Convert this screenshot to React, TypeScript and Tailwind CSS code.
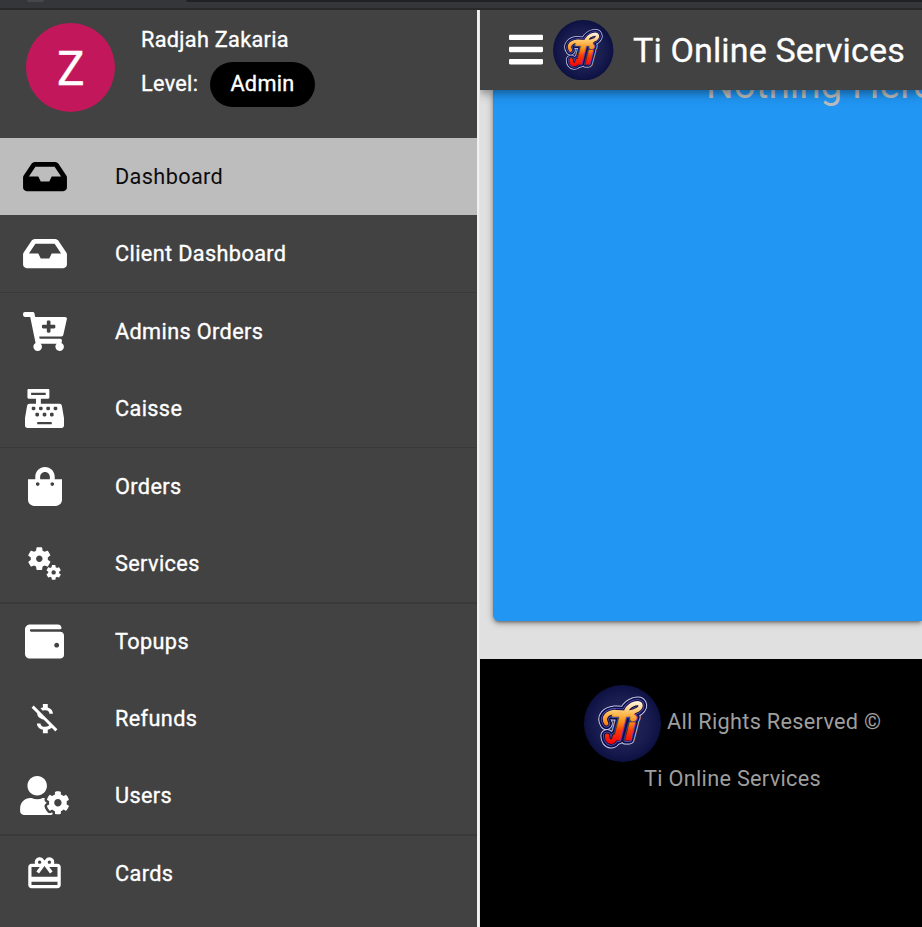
import { useId, type ReactNode } from "react";
import {
  FaInbox,
  FaCartPlus,
  FaCashRegister,
  FaShoppingBag,
  FaWallet,
  FaUserCog,
  FaBars,
} from "react-icons/fa";
import { MdMiscellaneousServices, MdMoneyOff, MdCardGiftcard } from "react-icons/md";

function Logo({ className }: { className: string }) {
  const id = useId();
  const layers = [
    { color: "#c9c9e6", width: 11.5 },
    { color: "#0a0d4c", width: 9 },
    { color: "#5957b4", width: 4.5 },
    { color: "#120b3a", width: 2.5 },
  ];
  const lettering = (
    <g transform="translate(48 72) skewX(-8)">
      <text x="-18" y="0" fontSize="51">T</text>
      <text x="5" y="0" fontSize="43">i</text>
    </g>
  );
  const flourish = "M29 50C24 42 30 36 40 35C53 36 62 37 70 32C76 27 74 22 66 24C60 26 57 29 55 33";
  const hook = "M40 67C40 76 30 76 30 66";
  return (
    <svg viewBox="0 0 100 100" className={className}>
      <defs>
        <radialGradient id={id + "b"}>
          <stop offset="0" stopColor="#242759" />
          <stop offset="0.65" stopColor="#1a1d50" />
          <stop offset="1" stopColor="#0d1142" />
        </radialGradient>
        <linearGradient id={id + "f"} gradientUnits="userSpaceOnUse" x1="0" y1="22" x2="0" y2="75">
          <stop offset="0" stopColor="#fff4e0" />
          <stop offset="0.28" stopColor="#ffbd55" />
          <stop offset="0.52" stopColor="#f98712" />
          <stop offset="0.7" stopColor="#fb3a08" />
          <stop offset="1" stopColor="#f50808" />
        </linearGradient>
        <linearGradient id={id + "t"} gradientUnits="userSpaceOnUse" x1="0" y1="-50" x2="0" y2="3">
          <stop offset="0" stopColor="#fff4e0" />
          <stop offset="0.28" stopColor="#ffbd55" />
          <stop offset="0.52" stopColor="#f98712" />
          <stop offset="0.7" stopColor="#fb3a08" />
          <stop offset="1" stopColor="#f50808" />
        </linearGradient>
      </defs>
      <circle cx="50" cy="50" r="50" fill={`url(#${id}b)`} />
      <g
        fontFamily="Lato, sans-serif"
        fontWeight="900"
        fontStyle="italic"
        strokeLinejoin="round"
        strokeLinecap="round"
      >
        {layers.map((l) => (
          <g key={l.color} stroke={l.color} strokeWidth={l.width} fill={l.color}>
            {lettering}
            <path d={flourish} fill="none" strokeWidth={l.width + 5.5} />
            <path d={hook} fill="none" strokeWidth={l.width + 6} />
          </g>
        ))}
        <g fill={`url(#${id}t)`} stroke={`url(#${id}t)`} strokeWidth="1.6">
          {lettering}
        </g>
        <g stroke={`url(#${id}f)`} fill="none">
          <path d={flourish} strokeWidth="5.5" />
          <path d={hook} strokeWidth="6" />
        </g>
      </g>
    </svg>
  );
}

interface Item {
  label: string;
  icon: ReactNode;
  active?: boolean;
}

const md = "size-[39px]";

const groups: Item[][] = [
  [
    { label: "Dashboard", icon: <FaInbox className="-mt-px h-[39px] w-[44px] text-black" />, active: true },
    { label: "Client Dashboard", icon: <FaInbox className="-mt-px h-[39px] w-[44px]" /> },
  ],
  [
    { label: "Admins Orders", icon: <FaCartPlus className="h-[39px] w-[44px]" /> },
    { label: "Caisse", icon: <FaCashRegister className="-mt-px size-[39px]" /> },
  ],
  [
    { label: "Orders", icon: <FaShoppingBag className="h-[39px] w-[34px]" /> },
    { label: "Services", icon: <MdMiscellaneousServices className={md} /> },
  ],
  [
    { label: "Topups", icon: <FaWallet className={md} /> },
    { label: "Refunds", icon: <MdMoneyOff className={md} /> },
    { label: "Users", icon: <FaUserCog className="h-[39px] w-[49px]" /> },
  ],
  [{ label: "Cards", icon: <MdCardGiftcard className={md} /> }],
];

const dividers = ["", "h-px", "h-px", "h-[2px] -mb-px", "h-[2px] -mb-px"];

function NavRow({ item }: { item: Item }) {
  return (
    <a
      className={
        "flex h-[77px] items-center pl-[14px] text-[21.7px] tracking-[0.37px] " +
        (item.active ? "bg-[#bdbdbd] text-[#0c0c0c]" : "text-white [-webkit-text-stroke:0.35px_white]")
      }
    >
      <span className="flex w-[61px] shrink-0 justify-center">{item.icon}</span>
      <span className="ml-10 pt-[2px]">{item.label}</span>
    </a>
  );
}

function Sidebar() {
  return (
    <aside className="w-[477px] shrink-0 overflow-hidden bg-[#424242] text-white">
      <div className="flex h-32 pl-[26px] pt-[13px]">
        <div className="flex size-[89px] shrink-0 items-center justify-center rounded-full bg-[#c2185b] text-[49px] leading-none">
          <span className="scale-x-[0.94] pt-[2px] [-webkit-text-stroke:0.3px_white]">Z</span>
        </div>
        <div className="ml-[26px] text-[21.7px] tracking-[0.3px] [-webkit-text-stroke:0.35px_white]">
          <div className="h-[39px] leading-[33px]">Radjah Zakaria</div>
          <div className="flex items-center">
            <span className="w-[69px]">Level:</span>
            <span className="flex h-[45px] w-[105px] items-center justify-center rounded-full bg-black">
              Admin
            </span>
          </div>
        </div>
      </div>
      <nav>
        {groups.map((g, i) => (
          <div key={i}>
            {i > 0 && <div className={"relative bg-[#393939] " + dividers[i]} />}
            {g.map((item) => (
              <NavRow key={item.label} item={item} />
            ))}
          </div>
        ))}
      </nav>
    </aside>
  );
}

export default function App() {
  return (
    <div className="flex h-[927px] w-[922px] flex-col overflow-hidden bg-[#424242] font-['Roboto',sans-serif]">
      <div className="h-[10px] shrink-0 overflow-hidden border-b-2 border-[#292929] bg-[#35363a]">
        <div className="flex h-[2px]">
          <div className="ml-[27px] h-[2px] w-[17px] rounded-b-full bg-[#46474b]" />
          <div className="ml-[142px] h-[2px] flex-1 rounded-bl-full bg-[#202124]" />
        </div>
      </div>
      <div className="flex min-h-0 flex-1">
        <Sidebar />
        <div className="w-[3px] shrink-0 border-l-2 border-[#f0f0f0] bg-[#e4e4e4]" />
        <main className="flex min-w-0 flex-1 flex-col overflow-hidden bg-[#e0e0e0]">
          <header className="relative z-10 flex h-20 shrink-0 items-center bg-[#424242] pl-[29px] text-white shadow-[0_3px_6px_-1px_rgba(0,0,0,0.2),0_6px_8px_rgba(0,0,0,0.14),0_2px_15px_rgba(0,0,0,0.12)]">
            <FaBars className="-mt-px h-[39px] w-[34px] shrink-0" />
            <Logo className="ml-[10px] size-[60.5px] shrink-0" />
            <h1 className="ml-[19.5px] whitespace-nowrap pt-px text-[34.1px] tracking-[0.12px] [-webkit-text-stroke:0.3px_white]">
              Ti Online Services
            </h1>
          </header>
          <section className="ml-[13px] h-[531px] shrink-0 rounded-bl-md bg-[#2196f3] pl-[213px] shadow-[0_3px_2px_-2px_rgba(0,0,0,0.2),0_2px_4px_rgba(0,0,0,0.3),0_2px_8px_rgba(0,0,0,0.2)]">
            <p className="-mt-[27px] whitespace-nowrap text-[38.75px] leading-[44px] text-[#bdbdbd]">
              Nothing Here
            </p>
          </section>
          <footer className="mt-[38px] flex-1 bg-black pl-[104px] pt-[26px] text-[21.7px] text-[#9e9e9e]">
            <div className="flex items-center">
              <Logo className="size-[77px] shrink-0" />
              <span className="-mt-[2px] ml-[6px] whitespace-nowrap tracking-[0.3px]">All Rights Reserved ©</span>
            </div>
            <div className="ml-[60px] leading-[33px] tracking-[0.3px]">Ti Online Services</div>
          </footer>
        </main>
      </div>
    </div>
  );
}
